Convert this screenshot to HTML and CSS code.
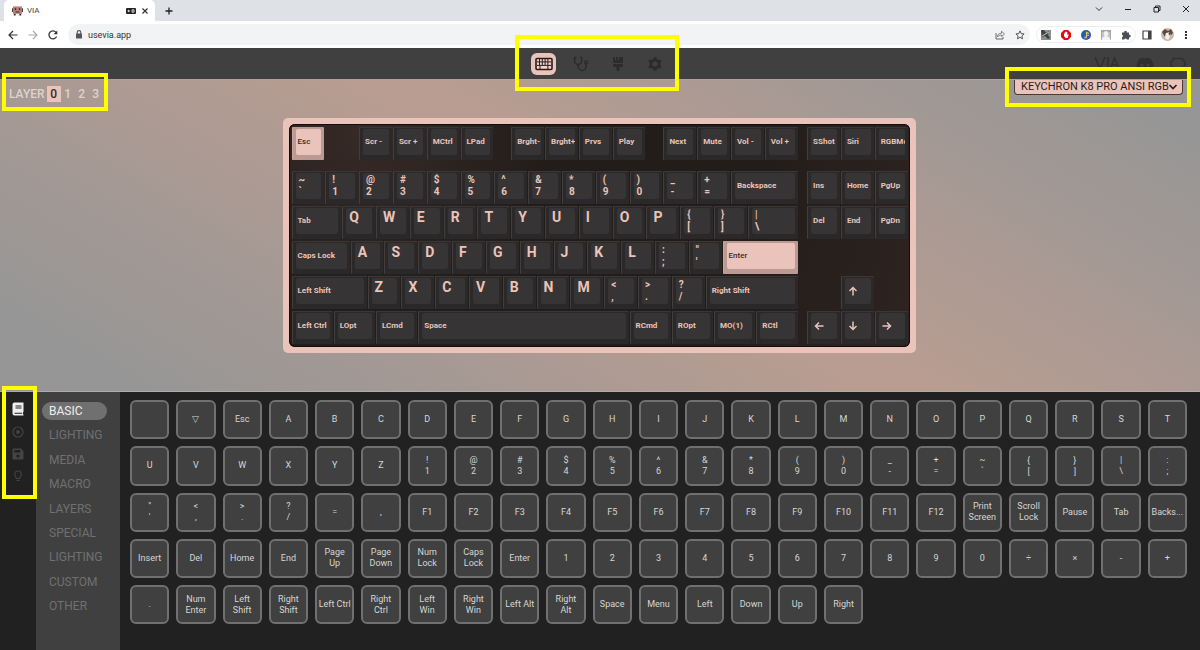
FILE: index.html
```html
<!DOCTYPE html>
<html lang="en">
<head>
<meta charset="utf-8">
<title>VIA</title>
<link rel="stylesheet" href="styles.css">
</head>
<body>
<div class="tabstrip">
  <div class="tab">
    <svg class="favicon" viewBox="0 0 12 10"><path fill="#b98079" d="M1 0h10v8H1z"/><path fill="#3c2a2a" d="M0 2h1v4H0zM11 2h1v4h-1zM3 2h1.500v2H3zM7.500 2H9v2H7.500zM2 8h2v2H2zM8 8h2v2H8zM4 5.500h4v1H4z"/></svg>
    <span class="tab-title">VIA</span>
    <svg class="pad" viewBox="0 0 10 6"><rect width="10" height="6" rx="1" fill="#222"/><path d="M1.500 3h2.400M2.700 1.800v2.400M6 1.800h2v2.400H6z" stroke="#fff" stroke-width=".8" fill="none"/></svg>
    <button class="plain" aria-label="Close tab"><svg width="6" height="6" viewBox="0 0 6 6"><path d="M.5.5l5 5M5.500.5l-5 5" stroke="#333" stroke-width="1.200"/></svg></button>
  </div>
  <button class="plain newtab" aria-label="New tab"><svg width="8" height="8" viewBox="0 0 8 8"><path d="M4 .5v7M.5 4h7" stroke="#222" stroke-width="1.300"/></svg></button>
  <div class="window-buttons">
    <button class="plain" aria-label="Search tabs"><svg width="8" height="8" viewBox="0 0 8 8"><path d="M1 2.500l3 3 3-3" fill="none" stroke="#333"/></svg></button>
    <button class="plain" aria-label="Minimize"><svg width="8" height="8" viewBox="0 0 8 8"><path d="M1 4.500h6" stroke="#222"/></svg></button>
    <button class="plain" aria-label="Restore"><svg width="8" height="8" viewBox="0 0 8 8"><path d="M1 2.500h4.500V7H1zM2.500 2.500V1H7v4.500H5.500" fill="none" stroke="#222"/></svg></button>
    <button class="plain" aria-label="Close"><svg width="8" height="8" viewBox="0 0 8 8"><path d="M1 1l6 6M7 1L1 7" stroke="#222"/></svg></button>
  </div>
</div>

<div class="toolbar">
  <button class="plain" aria-label="Back"><svg width="10" height="10" viewBox="0 0 10 10"><path d="M9.500 5H1.200M5 1L1 5l4 4" fill="none" stroke="#333" stroke-width="1.200"/></svg></button>
  <button class="plain" aria-label="Forward"><svg width="10" height="10" viewBox="0 0 10 10"><path d="M.5 5h8.300M5 1l4 4-4 4" fill="none" stroke="#aaa" stroke-width="1.100"/></svg></button>
  <button class="plain" aria-label="Reload"><svg width="10" height="10" viewBox="0 0 10 10"><path d="M8.600 6.500A4 4 0 1 1 8 2.300" fill="none" stroke="#333" stroke-width="1.300"/><path d="M9.300.5v3.700H5.600z" fill="#333"/></svg></button>
  <div class="address">
    <svg width="8" height="9" viewBox="0 0 8 9"><path d="M2.200 4V2.400a1.800 1.800 0 0 1 3.600 0V4" fill="none" stroke="#555" stroke-width="1.100"/><rect x="1" y="3.500" width="6" height="5" rx=".6" fill="#555"/></svg>
    <input class="url" type="text" value="usevia.app" aria-label="Address">
    <svg width="10" height="10" viewBox="0 0 10 10"><path d="M1 3v6h7V7" fill="none" stroke="#666"/><path d="M2.500 7c0-2.500 1.500-3.800 4-3.800V1.200L9.500 4l-3 2.600V5c-1.800 0-3 .6-4 2z" fill="none" stroke="#666" stroke-width=".8"/></svg>
    <svg width="10" height="10" viewBox="0 0 10 10"><path d="M5 .9l1.200 2.700 2.900.3-2.200 2 .6 2.900L5 7.300 2.500 8.800l.6-2.900-2.200-2 2.900-.3z" fill="none" stroke="#444" stroke-width=".9"/></svg>
  </div>
  <div class="extensions">
    <svg width="10" height="10" viewBox="0 0 10 10"><path fill="#8d9090" d="M0 0h10v10H0z"/><path fill="#3e4141" d="M0 0h3l2 3 3-2-1 4 2 3-2 1-3-3-3 1z"/><path d="M1 6l7-4" stroke="#c9caca"/></svg>
    <svg width="10" height="10" viewBox="0 0 10 10"><path fill="#e50909" d="M3 0h4l3 3v4l-3 3H3L0 7V3z"/><path fill="#fff" d="M3 3.500h.8V2h.8v-.6h.8V2h.9v3l.8-.8.600.5L6.500 8h-2L3 6z"/></svg>
    <svg width="10" height="10" viewBox="0 0 10 10"><circle cx="5" cy="5" r="5" fill="#2a5ba8"/><path d="M5.500 8V2.500L8 3.500M5.500 5L8 5.500" stroke="#e7cb4a" stroke-width="1.200" fill="none"/><circle cx="4.300" cy="7.500" r="1.300" fill="#79a8d6"/></svg>
    <svg width="10" height="10" viewBox="0 0 10 10"><path fill="#c4c4c4" d="M0 0h10v10H0z"/><path d="M0 9V1h10v8" fill="none" stroke="#8a8a8a"/><path fill="#f3f3f3" d="M3 3a2 2 0 0 1 4 0v2L6 6l3 2v2H1V8l3-2-1-1z"/></svg>
    <svg width="10" height="10" viewBox="0 0 10 10"><path fill="#4b4e52" d="M1 2.500h2.200a1.300 1.300 0 1 1 2.500 0H8v2.300a1.300 1.300 0 1 1 0 2.500V9.500H5.800a1.300 1.300 0 0 0-2.500 0H1V7.200a1.300 1.300 0 0 0 0-2.500z"/></svg>
  </div>
  <svg class="side" width="10" height="10" viewBox="0 0 10 10"><path d="M1 1h8v8H1z" fill="none" stroke="#444" stroke-width="1.200"/><path fill="#444" d="M6 1h3v8H6z"/></svg>
  <svg class="avatar" width="13" height="13" viewBox="0 0 13 13"><circle cx="6.500" cy="6.500" r="6.500" fill="#c9b8ac"/><path fill="#5e4a3c" d="M1 4l3-3 3 2 3-2 2 4-2 2-2-3-3 1-1 4z"/><path fill="#f5eee8" d="M5 5h2l2 4-2 3-3-2z"/><circle cx="8.500" cy="6" r=".8" fill="#222"/></svg>
  <button class="plain" aria-label="Menu"><svg width="4" height="10" viewBox="0 0 4 10"><path fill="#333" d="M1 1h2v2H1zM1 4h2v2H1zM1 7h2v2H1z"/></svg></button>
</div>

<header class="app-header">
  <nav class="views callout">
    <button class="view active" aria-label="Configure"><svg width="18" height="14" viewBox="0 0 18 14"><rect x="1" y="1.500" width="16" height="11" rx="1" fill="#f3d2c8" stroke="#2a1c1a" stroke-width="1.600"/><path d="M2 4.900h14M2 8.400h14M4.500 2v6M7.300 2v6M10.100 2v6M12.900 2v10M5 8.500V12" stroke="#2a1c1a" stroke-width="1" fill="none"/></svg></button>
    <button class="view" aria-label="Key Tester"><svg width="16" height="16" viewBox="0 0 16 16"><path d="M3.500 1.500H1.600V5a3.500 3.500 0 0 0 7 0V1.500H6.700M5.100 8.500v2a4 4 0 0 0 8 0V8" fill="none" stroke="#2c2c2c" stroke-width="1.500"/><circle cx="13.100" cy="6.500" r="1.500" fill="none" stroke="#2c2c2c" stroke-width="1.400"/></svg></button>
    <button class="view" aria-label="Design"><svg width="16" height="16" viewBox="0 0 16 16"><path fill="#2c2c2c" d="M3 1h2v3h1V1h2v3h1V1h4v6H3zM3 8h10v2a1 1 0 0 1-1 1H9.500v2.500a1.500 1.500 0 0 1-3 0V11H4a1 1 0 0 1-1-1z"/></svg></button>
    <button class="view" aria-label="Settings"><svg width="16" height="16" viewBox="0 0 16 16"><circle cx="8" cy="8" r="4" fill="none" stroke="#2c2c2c" stroke-width="3"/><path d="M8 1v3M8 12v3M2 4.500l2.500 1.500M11.500 10l2.500 1.500M2 11.500L4.500 10M11.500 6L14 4.500" stroke="#2c2c2c" stroke-width="3"/></svg></button>
  </nav>
  <div class="links">
    <a href="#via" aria-label="VIA"><svg width="26" height="12" viewBox="0 0 26 12"><path d="M1 0l5 12L11 0M14 0v12M16 12l4.500-11L25 12M18 8h5" fill="none" stroke="#303030" stroke-width="1.600"/></svg></a>
    <a href="#discord" aria-label="Discord"><svg width="18" height="14" viewBox="0 0 18 14"><path fill="#303030" d="M3 2l4-1.500.8 1h2.400l.8-1L15 2c2 3 3 6 2.500 10L14 14H4L.5 12C0 8 1 5 3 2z"/><circle cx="6" cy="8" r="1.600" fill="#404040"/><circle cx="12" cy="8" r="1.600" fill="#404040"/></svg></a>
    <a href="#github" aria-label="GitHub"><svg width="16" height="14" viewBox="0 0 16 14"><path d="M5 13v-2C0 10 0 5 2.500 3.500L3.500 1.500 6 1.500h4l2.500 0 1 2C16 5 16 10 11 11v2" fill="none" stroke="#303030" stroke-width="1.700"/></svg></a>
  </div>
</header>

<main class="stage">
  <div class="stage-bar">
    <div class="layers callout">
      <span class="layers-label">LAYER</span>
      <button class="layer current">0</button><button class="layer">1</button><button class="layer">2</button><button class="layer">3</button>
    </div>
    <div class="device callout">
      <select class="device-select" aria-label="Keyboard"><option>KEYCHRON K8 PRO ANSI RGB</option></select>
      <svg class="chevron" width="10" height="8" viewBox="0 0 10 8"><path d="M1.500 2L5 5.500 8.500 2" fill="none" stroke="#2b1d1b" stroke-width="1.700"/></svg>
    </div>
  </div>
  <div class="case"><div class="plate" id="keyboard"></div></div>
</main>

<section class="panel">
  <nav class="rail">
    <div class="rail-icons callout">
      <button class="plain" aria-label="Keymap"><svg width="12" height="14" viewBox="0 0 12 14"><path fill="#f0f0f0" d="M2.500.5h9v9.500l-.6.500v1.500l.6.500v1h-9A2 2 0 0 1 .5 11.500v-9a2 2 0 0 1 2-2z"/><path d="M3.500 4h6M3.500 6h6M2.500 11.200h7.500" stroke="#222" stroke-width="1.100"/></svg></button>
      <button class="plain" aria-label="Macros"><svg width="12" height="12" viewBox="0 0 12 12"><circle cx="6" cy="6" r="5" fill="none" stroke="#444" stroke-width="1.200"/><circle cx="6" cy="6" r="1.900" fill="#444"/></svg></button>
      <button class="plain" aria-label="Save and load"><svg width="12" height="12" viewBox="0 0 12 12"><path fill="#444" d="M1.500.5H9L11.500 3v7.500a1 1 0 0 1-1 1h-9a1 1 0 0 1-1-1v-9a1 1 0 0 1 1-1z"/><path fill="#212121" d="M2.300 2h6v2.500h-6z"/><circle cx="6" cy="8" r="1.600" fill="#212121"/></svg></button>
      <button class="plain" aria-label="Lighting"><svg width="12" height="12" viewBox="0 0 12 12"><path d="M4.300 8.500c0-1.700-1.500-2-1.500-4.300a3.200 3.200 0 0 1 6.400 0c0 2.300-1.500 2.600-1.500 4.300zM4.500 10.500h3" fill="none" stroke="#444" stroke-width="1.100"/></svg></button>
    </div>
  </nav>
  <nav class="menu">
    <div class="menu-list">
      <a class="menu-item selected" href="#basic">BASIC</a>
      <a class="menu-item" href="#lighting">LIGHTING</a>
      <a class="menu-item" href="#media">MEDIA</a>
      <a class="menu-item" href="#macro">MACRO</a>
      <a class="menu-item" href="#layers">LAYERS</a>
      <a class="menu-item" href="#special">SPECIAL</a>
      <a class="menu-item" href="#qmk-lighting">LIGHTING</a>
      <a class="menu-item" href="#custom">CUSTOM</a>
      <a class="menu-item" href="#other">OTHER</a>
    </div>
  </nav>
  <div class="keycodes" id="keycodes"></div>
</section>
<script src="keys.js"></script>
</body>
</html>
```

FILE: styles.css
```css
* { box-sizing: border-box; }

body {
  margin: 0;
  min-height: 100vh;
  display: flex;
  flex-direction: column;
  background: #212121;
  font-family: Roboto, "Noto Sans", sans-serif;
  overflow-x: hidden;
}

button, input, select { font-family: inherit; }
svg { display: block; flex: none; }

.plain {
  padding: 0;
  border: 0;
  background: none;
  display: flex;
  align-items: center;
  justify-content: center;
}

/* Yellow frame drawn around a group of controls */
.callout { position: relative; }
.callout::after {
  content: "";
  position: absolute;
  border: 4px solid #ffff00;
  pointer-events: none;
  z-index: 5;
}

/* Browser chrome */
.tabstrip {
  height: 21px;
  display: flex;
  align-items: center;
  background: #dee1e6;
}
.tab {
  width: 151px;
  height: 21px;
  margin-left: 4px;
  padding: 0 7px 0 8px;
  display: flex;
  align-items: center;
  background: #fff;
  border-radius: 5px 5px 0 0;
}
.favicon { width: 11px; height: 10px; }
.tab-title {
  flex: 1;
  margin-left: 4px;
  font-size: 8px;
  color: #444;
}
.pad { width: 10px; height: 6px; margin-right: 6px; }
.newtab { margin-left: 10px; }
.window-buttons {
  margin: 0 10px 4px auto;
  display: flex;
  gap: 21px;
}
.toolbar {
  height: 27px;
  padding: 0 12px 0 8px;
  display: flex;
  align-items: center;
  gap: 10px;
  background: #fff;
}
.address {
  flex: 1;
  height: 21px;
  margin-right: -4px;
  padding: 0 5px 0 7px;
  display: flex;
  align-items: center;
  gap: 10px;
  background: #f1f3f4;
  border-radius: 11px;
}
.url {
  flex: 1;
  min-width: 0;
  margin-left: -5px;
  padding: 0;
  border: 0;
  background: none;
  font-size: 9px;
  color: #333;
}
.extensions {
  height: 17px;
  margin-right: -4px;
  padding: 0 4px;
  display: flex;
  align-items: center;
  gap: 10px;
  border: 1px solid #eceef0;
  border-radius: 9px;
}
.side { margin-right: -1px; }

/* App header */
.app-header {
  height: 31px;
  padding-right: 2px;
  display: grid;
  grid-template-columns: 1fr auto 1fr;
  align-items: center;
  background: #404040;
}
.views {
  grid-column: 2;
  display: flex;
  gap: 12px;
}
.views::after { inset: -18px -12px -16px -16px; }
.view {
  width: 25px;
  height: 22px;
  padding: 0;
  display: flex;
  align-items: center;
  justify-content: center;
  border: 0;
  border-radius: 6px;
  background: none;
}
.view.active { background: #eac4ba; }
.links {
  height: 14px;
  margin-right: 12px;
  display: flex;
  justify-content: flex-end;
  gap: 16px;
}

/* Keyboard stage */
.stage {
  display: flex;
  flex-direction: column;
  align-items: center;
  padding: 0 2px 38px 0;
  border-top: 1px solid #b3a29b;
  border-bottom: 1px solid #b3aaa6;
  background: linear-gradient(31deg, #969696 8%, #ba9d91 53%, #969696 94%);
}
.stage-bar {
  width: 100%;
  height: 38px;
  padding: 0 15px 0 9px;
  display: flex;
  justify-content: space-between;
  align-items: flex-start;
}
.layers {
  margin-top: 6px;
  display: flex;
  align-items: center;
  font-size: 12px;
  font-weight: 500;
  color: #ddd4d1;
}
.layers::after { inset: -13px -5px -9px -7px; }
.layers-label { margin-right: 2px; }
.layer {
  width: 14px;
  height: 16px;
  padding: 0;
  border: 0;
  background: none;
  font-size: 12px;
  font-weight: 500;
  color: inherit;
}
.layer.current { background: #eac4ba; color: #3a2a28; }
.device { display: flex; }
.device::after { inset: -13px -8px -12px -9px; }
.device-select {
  width: 169px;
  height: 15px;
  padding: 0 12px 0 6px;
  appearance: none;
  border: 1px solid #4a3a37;
  border-top: 0;
  border-radius: 0 0 4px 4px;
  background: #eac4ba;
  color: #2b1d1b;
  font-size: 11px;
  line-height: 14px;
}
.chevron {
  position: absolute;
  right: 5px;
  top: 3px;
  pointer-events: none;
}

.case {
  width: 100%;
  max-width: 633px;
  padding: 6px;
  border-radius: 5px;
  background: #eac4ba;
}
.plate {
  display: grid;
  grid-template-columns: repeat(73, 1fr);
  grid-template-rows: 33px 7px;
  grid-auto-rows: 33px;
  row-gap: 2px;
  padding: 3px 1px 3px 3px;
  border-radius: 6px;
  background: radial-gradient(circle at 12% 4%, #372a27, #231d1a 30%, #231d1a 70%, #2e2421);
  box-shadow: inset 0 0 0 1px #120e0d;
}
.key {
  position: relative;
  min-width: 0;
  margin-right: 1px;
  padding: 2px 3px 5px;
  display: flex;
  border: 0;
  border-left: 1px solid #433e3c;
  border-radius: 1px;
  background: #2a2828;
  box-shadow: inset 0 1px #3a3736;
}
.cap {
  flex: 1;
  min-width: 0;
  align-self: stretch;
  padding-left: 2px;
  display: flex;
  flex-direction: column;
  justify-content: center;
  align-items: flex-start;
  overflow: hidden;
  border-radius: 2px;
  background: #363434;
  color: #eac4ba;
  font-size: 8px;
  line-height: 12px;
  font-weight: 700;
  white-space: nowrap;
}
.cap.letter {
  justify-content: flex-start;
  padding-left: 3px;
  font-size: 14px;
  line-height: 18px;
}
.cap.pair { font-size: 10px; padding-left: 3px; }
.cap.arrow svg { margin-left: 1px; }
.key.accent {
  border-color: #c9a69d;
  background: #ba9a92;
  box-shadow: none;
}
.key.accent .cap {
  background: #eac4ba;
  color: #3a2a28;
  font-weight: 500;
}

/* Keycode panel */
.panel {
  flex: 1;
  display: flex;
  background: #212121;
}
.rail {
  width: 36px;
  padding-top: 10px;
}
.rail-icons {
  display: flex;
  flex-direction: column;
  align-items: center;
  gap: 10px;
}
.rail-icons::after { inset: -16px -1px -17px 2px; }
.menu {
  width: 84px;
  padding: 10px 13px 0 6px;
  background: #404040;
}
.menu-list {
  min-height: 213px;
  display: flex;
  flex-direction: column;
  justify-content: space-between;
}
.menu-item {
  height: 18px;
  padding-left: 7px;
  border-radius: 9px;
  font-size: 12px;
  line-height: 18px;
  color: #707070;
  text-decoration: none;
}
.menu-item.selected {
  background: #707070;
  color: #eee;
}
.keycodes {
  flex: 1;
  padding: 8px 13px 16px 10px;
  display: grid;
  grid-template-columns: repeat(auto-fill, minmax(39px, 1fr));
  gap: 7px;
  align-content: start;
}
.keycode {
  aspect-ratio: 1;
  min-width: 0;
  padding: 0;
  border: 2px solid #707070;
  border-radius: 6px;
  background: #404040;
  color: #d6d6d6;
  font-size: 9px;
  line-height: 11px;
  white-space: pre-line;
}
```

FILE: keys.js
```js
// Physical keys: [row, x in quarter units, width in quarter units, legend, accent]
const keys = [];
const run = (row, x, legends) => legends.forEach((l, i) => keys.push([row, x + i * 4, 4, l]));

keys.push([1, 0, 4, "Esc", true]);
run(1, 8, ["Scr -", "Scr +", "MCtrl", "LPad"]);
run(1, 26, ["Brght-", "Brght+", "Prvs", "Play"]);
run(1, 44, ["Next", "Mute", "Vol -", "Vol +"]);
run(1, 61, ["SShot", "Siri", "RGBMd"]);

run(3, 0, ["~\n`", "!\n1", "@\n2", "#\n3", "$\n4", "%\n5", "^\n6", "&\n7", "*\n8", "(\n9", ")\n0", "_\n-", "+\n="]);
keys.push([3, 52, 8, "Backspace"]);
run(3, 61, ["Ins", "Home", "PgUp"]);

keys.push([4, 0, 6, "Tab"]);
run(4, 6, [..."QWERTYUIOP", "{\n[", "}\n]"]);
keys.push([4, 54, 6, "|\n\\"]);
run(4, 61, ["Del", "End", "PgDn"]);

keys.push([5, 0, 7, "Caps Lock"]);
run(5, 7, [..."ASDFGHJKL", ":\n;", "\"\n'"]);
keys.push([5, 51, 9, "Enter", true]);

keys.push([6, 0, 9, "Left Shift"]);
run(6, 9, [..."ZXCVBNM", "<\n,", ">\n.", "?\n/"]);
keys.push([6, 49, 11, "Right Shift"], [6, 65, 4, "up"]);

["Left Ctrl", "LOpt", "LCmd"].forEach((l, i) => keys.push([7, i * 5, 5, l]));
keys.push([7, 15, 25, "Space"]);
["RCmd", "ROpt", "MO(1)", "RCtl"].forEach((l, i) => keys.push([7, 40 + i * 5, 5, l]));
run(7, 61, ["left", "down", "right"]);

const arrows = { up: 0, right: 90, down: 180, left: 270 };
const board = document.getElementById("keyboard");
for (const [row, x, w, legend, accent] of keys) {
  const key = document.createElement("button");
  key.className = accent ? "key accent" : "key";
  key.style.gridArea = `${row} / ${x + 1} / auto / span ${w}`;
  const cap = document.createElement("span");
  cap.className = "cap";
  if (legend in arrows) {
    key.setAttribute("aria-label", legend);
    cap.classList.add("arrow");
    cap.innerHTML = `<svg width="10" height="10" viewBox="0 0 10 10"><path transform="rotate(${arrows[legend]} 5 5)" d="M5 9.500V1.500M1.500 5L5 1.500 8.500 5" fill="none" stroke="#eac4ba" stroke-width="1.500"/></svg>`;
  } else if (legend.includes("\n")) {
    cap.classList.add("pair");
    for (const part of legend.split("\n")) {
      const line = document.createElement("span");
      line.textContent = part;
      cap.append(line);
    }
  } else {
    if (legend.length === 1) cap.classList.add("letter");
    cap.textContent = legend;
  }
  key.append(cap);
  board.append(key);
}

const codes = [
  "", "▽", "Esc", ..."ABCDEFGHIJKLMNOPQRSTUVWXYZ",
  "!\n1", "@\n2", "#\n3", "$\n4", "%\n5", "^\n6", "&\n7", "*\n8", "(\n9", ")\n0",
  "_\n-", "+\n=", "~\n`", "{\n[", "}\n]", "|\n\\", ":\n;", "\"\n'", "<\n,", ">\n.", "?\n/", "=", ",",
  ...Array.from({ length: 12 }, (_, i) => "F" + (i + 1)),
  "Print\nScreen", "Scroll\nLock", "Pause", "Tab", "Backs...",
  "Insert", "Del", "Home", "End", "Page\nUp", "Page\nDown", "Num\nLock", "Caps\nLock", "Enter",
  ..."1234567890", "÷", "×", "-", "+", ".",
  "Num\nEnter", "Left\nShift", "Right\nShift", "Left Ctrl", "Right\nCtrl", "Left\nWin", "Right\nWin",
  "Left Alt", "Right\nAlt", "Space", "Menu", "Left", "Down", "Up", "Right"
];
const grid = document.getElementById("keycodes");
for (const code of codes) {
  const b = document.createElement("button");
  b.className = "keycode";
  b.textContent = code;
  if (!code) b.setAttribute("aria-label", "None");
  grid.append(b);
}
```
